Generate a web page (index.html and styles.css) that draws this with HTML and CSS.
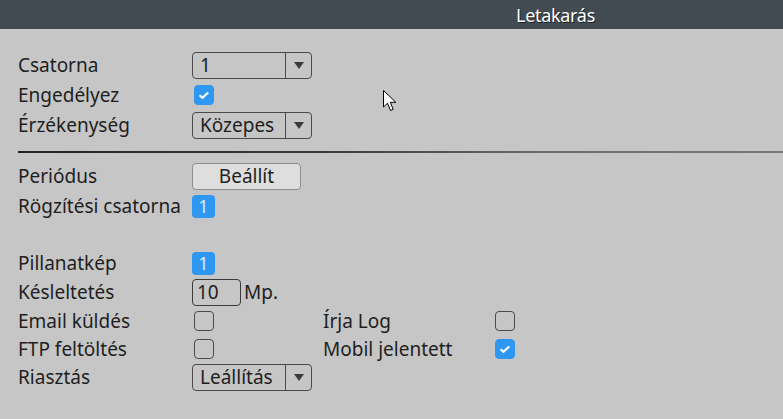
FILE: index.html
```html
<!DOCTYPE html>
<html lang="hu">
<head>
    <meta charset="UTF-8">
    <title>Letakarás</title>
    <link rel="stylesheet" href="styles.css">
</head>
<body>
<div class="header">
    <span class="title">Letakarás</span>
</div>

<div class="content">
    <div class="row tall">
        <span class="label">Csatorna</span>
        <div class="select"><span class="value">1</span><span class="arrow"></span></div>
    </div>
    <div class="row tall">
        <span class="label">Engedélyez</span>
        <span class="check on"><svg viewBox="0 0 20 20"><path d="M5 10.2l3.3 3 6.4-6" /></svg></span>
    </div>
    <div class="row tall">
        <span class="label">Érzékenység</span>
        <div class="select"><span class="value">Közepes</span><span class="arrow"></span></div>
    </div>

    <div class="divider"></div>

    <div class="row tall">
        <span class="label">Periódus</span>
        <button class="btn">Beállít</button>
    </div>
    <div class="row tall">
        <span class="label">Rögzítési csatorna</span>
        <span class="badge">1</span>
    </div>

    <div class="row spaced">
        <span class="label">Pillanatkép</span>
        <span class="badge">1</span>
    </div>
    <div class="row tall">
        <span class="label">Késleltetés</span>
        <span class="num">10</span>
        <span class="unit">Mp.</span>
    </div>
    <div class="row">
        <span class="label">Email küldés</span>
        <span class="check"></span>
        <span class="label second">Írja Log</span>
        <span class="check"></span>
    </div>
    <div class="row">
        <span class="label">FTP feltöltés</span>
        <span class="check"></span>
        <span class="label second">Mobil jelentett</span>
        <span class="check on"><svg viewBox="0 0 20 20"><path d="M5 10.2l3.3 3 6.4-6" /></svg></span>
    </div>
    <div class="row">
        <span class="label">Riasztás</span>
        <div class="select"><span class="value">Leállítás</span><span class="arrow"></span></div>
    </div>
</div>

<svg class="cursor" width="14" height="24" viewBox="0 0 14 24">
    <path d="M0.5 0.5 L0.5 17 L4.5 13.2 L7.5 20.5 L10.2 19.4 L7.3 12.3 L12.8 12.3 Z" fill="#fff" stroke="#000" stroke-width="1"/>
</svg>
</body>
</html>
```

FILE: styles.css
```css
body {
    margin: 0;
    background-color: #c6c6c6;
    font-family: "Noto Sans", "Open Sans", sans-serif;
    font-size: 19px;
    color: #1e1e1e;
    position: relative;
    height: 419px;
    overflow: hidden;
}

.header {
    height: 29px;
    background-color: #424a52;
    display: flex;
    align-items: center;
    padding-left: 516px;
}

.title {
    color: #ffffff;
    font-size: 18px;
    letter-spacing: -0.3px;
    text-shadow: 1px 1px 0 #1c1f22;
}

.content {
    padding-top: 21px;
    padding-left: 18px;
}

.row {
    display: flex;
    align-items: center;
    height: 28px;
}

.row.tall {
    height: 30px;
}

.row.spaced {
    height: 28px;
    margin-top: 28px;
}

.label {
    width: 174px;
    flex-shrink: 0;
    white-space: nowrap;
    line-height: 1;
}

.label.second {
    margin-left: 109px;
    width: 170px;
}

.select {
    box-sizing: border-box;
    width: 120px;
    height: 27px;
    border: 1px solid #4a4a4a;
    border-radius: 4px;
    display: flex;
    align-items: center;
}

.select .value {
    flex: 1;
    padding-left: 7px;
}

.select .arrow {
    width: 25px;
    height: 100%;
    border-left: 1px solid #4a4a4a;
    display: flex;
    align-items: center;
    justify-content: center;
}

.select .arrow::after {
    content: "";
    border-left: 5px solid transparent;
    border-right: 5px solid transparent;
    border-top: 7px solid #3a3a3a;
}

.check {
    box-sizing: border-box;
    width: 20px;
    height: 20px;
    margin-left: 2px;
    border: 1px solid #4a4a4a;
    border-radius: 4px;
    display: flex;
}

.check.on {
    background-color: #2d97f2;
    border-color: #2d97f2;
}

.check svg {
    width: 18px;
    height: 18px;
    fill: none;
    stroke: #ffffff;
    stroke-width: 2.4;
}

.divider {
    height: 2px;
    margin-top: 11px;
    margin-bottom: 8px;
    background: linear-gradient(to right, #222222, #3a3a3a 40%, #6c6c6c 70%, #777777);
}

.btn {
    box-sizing: border-box;
    width: 109px;
    height: 27px;
    border: 1px solid #8e8e8e;
    border-radius: 4px;
    background-color: #dedede;
    font-family: inherit;
    font-size: 19px;
    color: #1e1e1e;
    padding: 0;
    line-height: 1;
}

.badge {
    width: 23px;
    height: 23px;
    border-radius: 4px;
    background-color: #2d97f2;
    color: #d8ecff;
    display: flex;
    align-items: center;
    justify-content: center;
    font-size: 18px;
}

.num {
    box-sizing: border-box;
    width: 49px;
    height: 27px;
    border: 1px solid #3a3a3a;
    border-radius: 4px;
    padding-left: 4px;
    display: flex;
    align-items: center;
}

.unit {
    margin-left: 3px;
}

.cursor {
    position: absolute;
    left: 383px;
    top: 90px;
}
```
